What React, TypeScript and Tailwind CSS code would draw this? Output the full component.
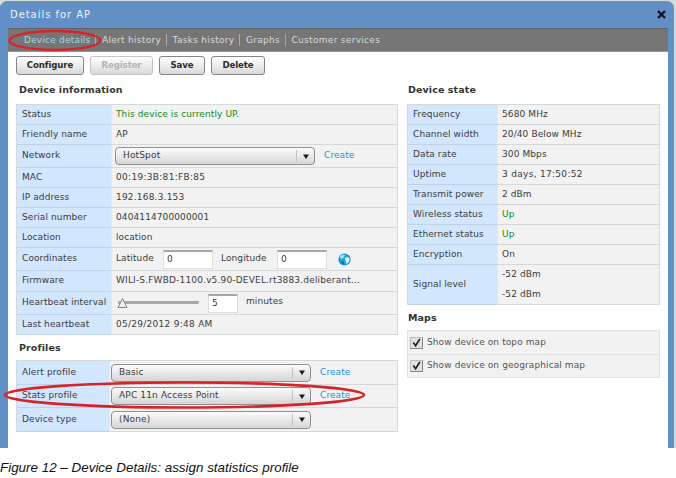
import type { ReactNode } from "react";

const tabs = ["Device details", "Alert history", "Tasks history", "Graphs", "Customer services"];

const deviceState = [
  { label: "Frequency", value: "5680 MHz", className: "" },
  { label: "Channel width", value: "20/40 Below MHz", className: "" },
  { label: "Data rate", value: "300 Mbps", className: "" },
  { label: "Uptime", value: "3 days, 17:50:52", className: "tracking-[0.3px]" },
  { label: "Transmit power", value: "2 dBm", className: "" },
  { label: "Wireless status", value: "Up", className: "text-[#16881a]" },
  { label: "Ethernet status", value: "Up", className: "text-[#16881a]" },
  { label: "Encryption", value: "On", className: "" },
];

/* ── Label / value row ── */
function Row({
  label,
  height = "h-5",
  labelWidth = "w-[94px]",
  pad = "pl-1 pb-[2px]",
  children,
}: {
  label: string;
  height?: string;
  labelWidth?: string;
  pad?: string;
  children: ReactNode;
}) {
  return (
    <div className={`flex ${height}`}>
      <div className={`${labelWidth} flex shrink-0 items-center border-b border-[#bfd2e6] bg-[#d2e6fe] pb-[2px] pl-[5px]`}>
        {label}
      </div>
      <div className={`flex flex-1 items-center border-b border-l border-b-[#d6d9da] border-l-[#e2eaf0] bg-[#f2f2f2] ${pad}`}>
        {children}
      </div>
    </div>
  );
}

function Heading({ children, pad = "pl-[3px]" }: { children: string; pad?: string }) {
  return <h2 className={`${pad} text-[9.5px] font-bold tracking-[0.1px] text-[#333]`}>{children}</h2>;
}

function Button({ children, width, disabled }: { children: string; width: string; disabled?: boolean }) {
  return (
    <button
      disabled={disabled}
      className={`${width} h-[19px] rounded-[3px] border bg-linear-to-b from-white to-[#d9d9d9] text-[8.6px] leading-[15px] font-bold tracking-[-0.1px] ${
        disabled ? "border-[#c4c4c4] text-[#b4b4b4]" : "border-[#858585] text-[#2c2c2c]"
      }`}
    >
      {children}
    </button>
  );
}

function Select({ value }: { value: string }) {
  return (
    <div className="flex h-[18px] w-[200px] shrink-0 items-center rounded-[4px] border border-[#8f8f8f] bg-linear-to-b from-[#fcfcfc] to-[#d5d5d5] pl-[7px]">
      <span className="flex-1 pb-[2px] tracking-[0.15px]">{value}</span>
      <span className="flex h-3 w-[18px] items-center justify-center border-l border-[#c0c0c0]">
        <svg width="6" height="5" viewBox="0 0 6 5" fill="#1a1a1a">
          <path d="M0 0.5h6L3 5z" />
        </svg>
      </span>
    </div>
  );
}

function Create() {
  return <a className="ml-[9px] pb-[2px] tracking-[0.1px] text-[#2492dd]">Create</a>;
}

function NumberBox({ value, width }: { value: string; width: string }) {
  return (
    <span className={`${width} flex h-[19px] items-center border border-t-2 border-[#dcdddd] border-t-[#a5a8a9] bg-white pb-[2px] pl-[3px]`}>
      {value}
    </span>
  );
}

function Globe() {
  return (
    <svg className="ml-[11px]" width="13" height="13" viewBox="0 0 13 13">
      <circle cx="6.5" cy="6.5" r="6.1" fill="#168fd0" />
      <circle cx="6.5" cy="6.5" r="5.1" fill="#25a5df" />
      <path d="M2 3l3-1.6 2 .8-1.2 2L3.7 6 2.2 5z" fill="#a8e1f6" />
      <path d="M7 5l3-1 1.7 2.2-1 2.8-2.2 1.9L7.6 8z" fill="#e1f5fc" />
      <path d="M3 8l2.5.4.5 2.3-1.4.5z" fill="#0869a8" />
    </svg>
  );
}

function CheckRow({ label, height }: { label: string; height: string }) {
  return (
    <div className={`flex ${height} items-center border-b border-[#e2e3e3] pl-[2px]`}>
      <svg width="13" height="12" viewBox="0 0 13 12">
        <rect x="0.5" y="0.5" width="12" height="11" fill="#e2e2e2" stroke="#bdbdbd" />
        <path d="M.5 11.5h12V.5" fill="none" stroke="#858585" />
        <path d="M3.3 5.5l2.3 3.3L9.8 2" fill="none" stroke="#222" strokeWidth="1.7" />
      </svg>
      <span className="ml-1 pb-[2px] text-[#555]">{label}</span>
    </div>
  );
}

export default function App() {
  return (
    <div className="relative h-[478px] w-[676px] overflow-hidden bg-white font-['DejaVu_Sans',sans-serif] text-[9px] leading-3 tracking-[0.1px] whitespace-nowrap text-[#3c3c3c]">
      <div className="h-[448px] bg-[#d3dcd5] pt-[1px] pr-[2px]">
        <div className="flex h-full flex-col rounded-t-[7px] border-t border-[#6d93bb] bg-[#628fc6] pr-[6px] pl-2">
          {/* Title bar */}
          <header className="flex h-[26px] shrink-0 items-center justify-between pr-[2px] pl-[2px]">
            <h1 className="text-[10px] tracking-[0.95px] text-[#eef4fb]">Details for AP</h1>
            <svg className="mb-[2px]" width="9" height="9" viewBox="0 0 9 9" stroke="#101820" strokeWidth="2.4">
              <path d="M1 1l7 7M8 1L1 8" />
            </svg>
          </header>

          {/* Tabs */}
          <nav className="flex h-6 shrink-0 items-center border-t border-b border-t-[#5c6266] border-b-[#929292] bg-[#767676] pb-px pl-4 tracking-[0.3px] text-[#d8d8d8]">
            {tabs.map((tab, i) => (
              <span
                key={tab}
                className={i === 0 ? "tracking-[0.2px] text-[#a2d8e2]" : "ml-[5px] border-l border-[#aaa] pl-[5.5px]"}
              >
                {tab}
              </span>
            ))}
          </nav>

          <main className="flex-1 bg-white pt-1 pl-2">
            <div className="flex gap-[6px]">
              <Button width="w-[68px]">Configure</Button>
              <Button width="w-[63px]" disabled>Register</Button>
              <Button width="w-[46px]">Save</Button>
              <Button width="w-[54px]">Delete</Button>
            </div>

            <div className="mt-[9px] flex gap-[9px]">
              <div className="w-[382px]">
                <Heading>Device information</Heading>
                <section className="mt-2 border border-b-0 border-[#d3dadd]">
                  <Row label="Status"><span className="text-[#16881a]">This device is currently UP.</span></Row>
                  <Row label="Friendly name">AP</Row>
                  <Row label="Network" height="h-[23px]" pad="pl-[3px]">
                    <Select value="HotSpot" />
                    <Create />
                  </Row>
                  <Row label="MAC"><span className="tracking-[0.3px]">00:19:3B:81:FB:85</span></Row>
                  <Row label="IP address"><span className="tracking-[0.2px]">192.168.3.153</span></Row>
                  <Row label="Serial number">0404114700000001</Row>
                  <Row label="Location">location</Row>
                  <Row label="Coordinates" height="h-[23px]" pad="pl-1">
                    <span className="w-[47px] pb-[3px]">Latitude</span>
                    <NumberBox value="0" width="w-[50px]" />
                    <span className="ml-2 w-[56px] pb-[3px]">Longitude</span>
                    <NumberBox value="0" width="w-[50px]" />
                    <Globe />
                  </Row>
                  <Row label="Firmware" height="h-[21px]">
                    <span className="tracking-[0.17px]">WILI-S.FWBD-1100.v5.90-DEVEL.rt3883.deliberant...</span>
                  </Row>
                  <Row label="Heartbeat interval" height="h-[23px]" pad="pl-1">
                    <svg width="84" height="12" viewBox="0 0 84 12">
                      <rect x="2" y="4" width="81" height="3" rx="1" fill="#a5a8aa" />
                      <path d="M6.5 1.5L11 10.5H2z" fill="#eee" stroke="#888" />
                    </svg>
                    <span className="w-2" />
                    <NumberBox value="5" width="w-[30px]" />
                    <span className="ml-2 pb-[5px]">minutes</span>
                  </Row>
                  <Row label="Last heartbeat"><span className="tracking-[0.27px]">05/29/2012 9:48 AM</span></Row>
                </section>

                <div className="mt-[7px]"><Heading>Profiles</Heading></div>
                <section className="mt-[6px] border border-b-0 border-[#d3dadd]">
                  <Row label="Alert profile" height="h-[24px]" labelWidth="w-[92px]" pad="pl-[1px]">
                    <Select value="Basic" />
                    <Create />
                  </Row>
                  <Row label="Stats profile" height="h-[23px]" labelWidth="w-[92px]" pad="pl-[1px]">
                    <Select value="APC 11n Access Point" />
                    <Create />
                  </Row>
                  <Row label="Device type" height="h-[24px]" labelWidth="w-[92px]" pad="pl-[1px]">
                    <Select value="(None)" />
                  </Row>
                </section>
              </div>

              <div className="w-[253px]">
                <Heading pad="pl-px">Device state</Heading>
                <section className="mt-2 border border-b-0 border-[#d3dadd]">
                  {deviceState.map(({ label, value, className }) => (
                    <Row key={label} label={label} labelWidth="w-[89px]">
                      <span className={className}>{value}</span>
                    </Row>
                  ))}
                  <Row label="Signal level" height="h-10" labelWidth="w-[89px]">
                    <div className="leading-5">
                      <p>-52 dBm</p>
                      <p>-52 dBm</p>
                    </div>
                  </Row>
                </section>

                <div className="mt-[7px]"><Heading pad="pl-px">Maps</Heading></div>
                <section className="mt-[6px] border border-b-0 border-[#e0e2e2] bg-[#f2f2f2]">
                  <CheckRow label="Show device on topo map" height="h-6" />
                  <CheckRow label="Show device on geographical map" height="h-[23px]" />
                </section>
              </div>
            </div>
          </main>
        </div>
      </div>

      <p className="mt-[11px] font-['Liberation_Sans',sans-serif] text-[13.42px] leading-[18px] tracking-normal text-[#111] italic">
        Figure 12 – Device Details: assign statistics profile
      </p>

      {/* Red callouts */}
      <svg className="absolute inset-0" width="676" height="478" fill="none" stroke="#d8232a">
        <ellipse cx="55" cy="40.5" rx="45.5" ry="9.5" strokeWidth="2.3" />
        <ellipse cx="184.5" cy="395" rx="179.5" ry="12.5" strokeWidth="2.7" />
      </svg>
    </div>
  );
}
